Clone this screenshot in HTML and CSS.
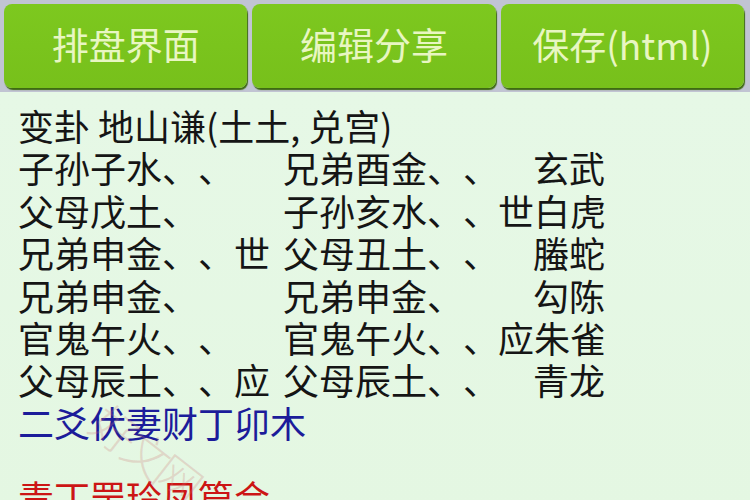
FILE: index.html
```html
<!DOCTYPE html>
<html lang="zh">
<head>
<meta charset="utf-8">
<link rel="stylesheet" href="styles.css">
</head>
<body>
<div class="toolbar">
  <div class="btn">排盘界面</div>
  <div class="btn">编辑分享</div>
  <div class="btn">保存(html)</div>
</div>
<div class="content">
  <div class="line">变卦 地山谦(土土, 兑宫)</div>
  <div class="rows">
    <span>子孙子水、、</span><span>兄弟酉金、、</span><span class="r">玄武</span>
    <span>父母戊土、</span><span>子孙亥水、、</span><span class="r">世白虎</span>
    <span>兄弟申金、、世</span><span>父母丑土、、</span><span class="r">螣蛇</span>
    <span>兄弟申金、</span><span>兄弟申金、</span><span class="r">勾陈</span>
    <span>官鬼午火、、</span><span>官鬼午火、、</span><span class="r">应朱雀</span>
    <span>父母辰土、、应</span><span>父母辰土、、</span><span class="r">青龙</span>
  </div>
  <div class="line blue">二爻伏妻财丁卯木</div>
  <div class="line red">青丁罡玲凤篇合</div>
  <div class="watermark">好文网</div>
</div>
</body>
</html>
```
FILE: styles.css
```css
html, body {
  margin: 0;
  padding: 0;
  width: 750px;
  height: 500px;
  overflow: hidden;
  font-family: "Noto Sans CJK SC", "Noto Sans", sans-serif;
  text-spacing-trim: space-all;
  font-kerning: none;
}
body {
  background: #e5f7e4;
}
.toolbar {
  display: flex;
  gap: 5px;
  padding: 4px 6px 4px 4px;
  background: #c1c4d3;
  height: 84px;
}
.btn {
  flex: 1;
  display: flex;
  align-items: center;
  justify-content: center;
  background: linear-gradient(#7dc81f, #77c01b);
  border-radius: 8px;
  box-shadow: 1px 2px 1px #3f6b12;
  color: #e8f6c2;
  font-size: 37px;
  line-height: 1;
  padding-bottom: 4px;
  box-sizing: border-box;
}
.content {
  position: relative;
  padding: 12px 0 0 18px;
  background: linear-gradient(#e6f8e6, #e4f7e2);
  height: 408px;
  color: #151515;
  font-size: 36px;
  line-height: 42.4px;
}
.line {
  white-space: nowrap;
}
.rows {
  display: grid;
  grid-template-columns: 265px 215px 107px;
  white-space: nowrap;
}
.rows .r {
  text-align: right;
}
.blue {
  color: #1c1c9a;
}
.red {
  color: #cc1515;
  margin-top: 32px;
}
.watermark {
  position: absolute;
  left: 86px;
  top: 338px;
  font-size: 46px;
  font-weight: 300;
  color: rgba(205, 120, 120, 0.25);
  transform: rotate(38deg);
  letter-spacing: -6px;
  pointer-events: none;
}
```
